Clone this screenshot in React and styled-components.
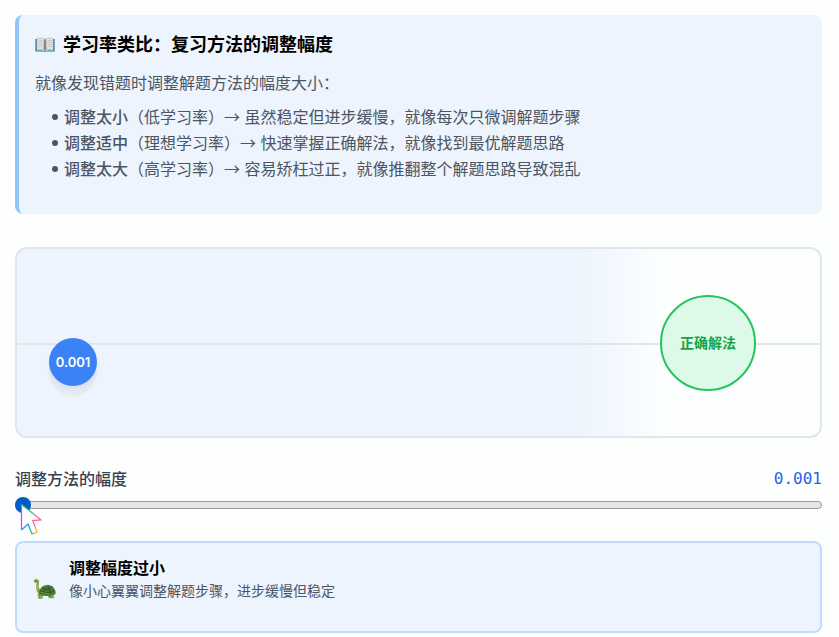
import React, { useState } from "react";
import styled, { createGlobalStyle } from "styled-components";

const GlobalStyle = createGlobalStyle`
  *, *::before, *::after { box-sizing: border-box; }
  body {
    margin: 0;
    background: #fdfffe;
    color: #000;
    font-family: Inter, "Noto Sans CJK SC", sans-serif;
    font-size: 16px;
    line-height: 26px;
  }
`;

const Page = styled.main`
  display: flex;
  flex-direction: column;
  padding: 15px 17px 4px 15px;
`;

const Analogy = styled.section`
  padding: 16px 16px 32px;
  border-left: 4px solid #93c5fd;
  border-radius: 8px;
  background: #edf4fd;
  color: #4b5563;
`;

const AnalogyTitle = styled.h3`
  display: flex;
  align-items: center;
  gap: 8px;
  margin: 0 0 11px;
  color: #000;
  font-size: 18px;
  font-weight: 600;
  line-height: 28px;
`;

const Intro = styled.p`
  margin: 0 0 8px;
`;

const Points = styled.ul`
  margin: 0;
  padding: 0 0 0 17px;
  list-style: none;
`;

const Point = styled.li`
  &::before {
    content: "";
    display: inline-block;
    width: 6px;
    height: 6px;
    margin-right: 6px;
    border-radius: 50%;
    background: #4b5563;
    vertical-align: 3px;
  }
`;

const Strong = styled.strong`
  font-weight: 500;
`;

const Arrow = styled.span`
  font-family: "Noto Sans CJK SC", sans-serif;
  line-height: 1;
`;

const Stage = styled.section`
  position: relative;
  height: 191px;
  margin-top: 33px;
  border: 2px solid #e2e5e9;
  border-radius: 12px;
  background: linear-gradient(90deg, #edf4fd 69%, #f4f9fe 75%, #fdfffe 81%);
`;

const Axis = styled.div`
  position: absolute;
  top: 50%;
  left: 0;
  right: 0;
  height: 2px;
  background: #e2e5e9;
`;

const Ball = styled.div`
  position: absolute;
  top: 89px;
  left: 32px;
  display: grid;
  place-items: center;
  width: 48px;
  height: 48px;
  border-radius: 50%;
  background: #3b82f6;
  box-shadow: 0 4px 4px -1px #d9dfea, 0 10px 2px 0 #e6eaf3;
  color: #fff;
  font-size: 13px;
  font-weight: 600;
`;

const Goal = styled.div`
  position: absolute;
  top: 46px;
  right: 64px;
  display: grid;
  place-items: center;
  width: 96px;
  height: 96px;
  border: 2px solid #22c55e;
  border-radius: 50%;
  background: #dcfae7;
  color: #16a34a;
  font-size: 14px;
  font-weight: 600;
`;

const Control = styled.section`
  display: flex;
  flex-direction: column;
  gap: 6px;
  margin-top: 28px;
`;

const ControlHeader = styled.div`
  display: flex;
  justify-content: space-between;
`;

const Label = styled.label`
  color: #374151;
  font-weight: 500;
`;

const Value = styled.output`
  color: #2563eb;
  font-family: "DejaVu Sans Mono", monospace;
`;

const SliderRow = styled.div`
  position: relative;
  display: flex;
`;

const Slider = styled.input`
  width: 100%;
  height: 14px;
  margin: 0;
  appearance: none;
  background: transparent;

  &::-webkit-slider-runnable-track {
    height: 8px;
    border: 1px solid #999b9d;
    border-radius: 4px;
    background: #e4e5e6;
  }

  &::-webkit-slider-thumb {
    appearance: none;
    width: 16px;
    height: 16px;
    margin-top: -5px;
    margin-left: -1px;
    border: 0;
    border-radius: 50%;
    background: #005cc8;
  }
`;

const Cursor = styled.svg`
  position: absolute;
  top: 5px;
  left: 5px;
  pointer-events: none;
`;

const Feedback = styled.section`
  display: flex;
  align-items: center;
  gap: 12px;
  height: 92px;
  margin-top: 29px;
  padding: 16px;
  border: 2px solid #bfdbfe;
  border-radius: 8px;
  background: #edf4fd;
`;

const FeedbackText = styled.div`
  align-self: flex-start;
  margin-top: -4px;
`;

const FeedbackTitle = styled.h4`
  margin: 0;
  font-size: 16px;
  font-weight: 600;
  line-height: 26px;
`;

const FeedbackDetail = styled.p`
  margin: 0;
  color: #4b5563;
  font-size: 14px;
  line-height: 20px;
`;

const BookIcon = () => (
  <svg width="20" height="20" viewBox="0 0 20 20" aria-hidden="true">
    <path d="M.5 4h19v12.5h-8q-1.5 1-3 0h-8z" fill="#2f80ab" />
    <path d="M.5 4h1v11.5h-1zM18.5 4h1v11.5h-1z" fill="#4f97ba" />
    <path d="M2 3.5q5-1.4 8 .5 3-1.9 8-.5v11.3q-5-.8-8 .8-3-1.6-8-.8z" fill="#e2e2df" stroke="#a9aaa9" strokeWidth=".5" />
    <path d="M10 4q-1.5 1-1.5 3v8l1.5.8 1.5-.8V7q0-2-1.5-3" fill="#a7a8a8" />
    <path d="M10 4.2v11.5" stroke="#55595e" strokeWidth=".8" />
    <path d="M3.5 5.5h4M3.5 7.5h4M3.5 9.5h4M3.5 11.5h4M12.7 5.5h4M12.7 7.5h4M12.7 9.5h4M12.7 11.5h4" stroke="#bcbdbc" strokeWidth=".7" />
    <path d="M2 15.2q5-1 8 .8 3-1.8 8-.8" fill="none" stroke="#f7f7f3" strokeWidth=".6" />
  </svg>
);

const TurtleIcon = () => (
  <svg width="24" height="28" viewBox="0 -4 24 28" aria-hidden="true">
    <path d="M4 18.2 7.8 15l2 1.7-1.2 4.5-3.6.1-.2-1.2 1.5-.8zM14 17l5-.5 1 4.5-4.2.3-.2-1.3z" fill="#75943a" />
    <path d="M7 17.5 9.8 17v4.8H6l.2-1.3 1-.3zM18 17l3.5-1.5 1.8.8-2.5 1.4.5 3.6h-2.8z" fill="#90a846" />
    <path d="M1.1 3.1Q3.3 1.2 5.5 3q.8.8.5 2l-.3 5q.3 2.2 2.8 3l-1 5Q4 16.5 3.3 12.5q-.2-3.5.2-6.7L1.2 5.5Q.4 4.2 1.1 3.1z" fill="#8da544" />
    <path d="M2 3.1q1.7-.8 3 .6M4 7.5q-.4 4 1.2 6.2" fill="none" stroke="#b5bf68" strokeWidth=".7" />
    <path d="M6 16.7q-.6-3 2.3-6.2 3-3.2 7.7-2.6 5.7 1.2 6.6 7.7-2.4 3.5-8.9 3.2-5 .1-7.7-2.1z" fill="#477831" />
    <path d="M7 13.7q6 4.2 15.2 0M10 9.5l1.3 3.2-1.5 5M11.3 12.7l5-1.2 3-2M16.3 11.5l1 4.7M13 8.3l3.3 3.2" fill="none" stroke="#254f2b" strokeWidth=".8" />
    <path d="M10.4 9.7q2.3-1.4 4.5-1M8 14.8q4 2.3 8 2" fill="none" stroke="#79a650" strokeWidth=".8" />
    <path d="M6.3 16.5q6.5 3.2 16.3-.8l-.7 1.6q-7 3.2-14.7.6z" fill="#5b7938" />
    <circle cx="3" cy="3.9" r=".6" fill="#182b20" />
  </svg>
);

const points = [
  ["调整太小", "（低学习率）", "虽然稳定但进步缓慢，就像每次只微调解题步骤"],
  ["调整适中", "（理想学习率）", "快速掌握正确解法，就像找到最优解题思路"],
  ["调整太大", "（高学习率）", "容易矫枉过正，就像推翻整个解题思路导致混乱"],
];

export default function App() {
  const [rate, setRate] = useState(0.001);
  const shown = rate.toFixed(3);

  return (
    <>
      <GlobalStyle />
      <Page>
        <Analogy>
          <AnalogyTitle><BookIcon />学习率类比：复习方法的调整幅度</AnalogyTitle>
          <Intro>就像发现错题时调整解题方法的幅度大小：</Intro>
          <Points>
            {points.map(([name, rateName, detail]) => (
              <Point key={name}>
                <Strong>{name}</Strong>{rateName}<Arrow>→</Arrow> {detail}
              </Point>
            ))}
          </Points>
        </Analogy>
        <Stage>
          <Axis />
          <Goal>正确解法</Goal>
          <Ball>{shown}</Ball>
        </Stage>
        <Control>
          <ControlHeader>
            <Label htmlFor="rate">调整方法的幅度</Label>
            <Value htmlFor="rate">{shown}</Value>
          </ControlHeader>
          <SliderRow>
            <Slider
              id="rate" type="range" min="0.001" max="1" step="0.001"
              value={rate} onChange={(e) => setRate(Number(e.target.value))}
            />
            <Cursor width="22" height="34" viewBox="0 0 22 34" aria-hidden="true">
              <path d="M1.5 1.5V27l6.5-6 4 10 5-2-4.2-11.5L21 17z" fill="#fff" />
              <path d="M1.5 1.5V27" stroke="#bd55ed" strokeWidth="1.3" />
              <path d="M1.5 27 8 21l2 5" fill="none" stroke="#219bf2" strokeWidth="1.3" />
              <path d="m10 26 2 5 2.5-1" fill="none" stroke="#1bc77a" strokeWidth="1.3" />
              <path d="m14.5 30 2.5-1-2-5.5" fill="none" stroke="#ffac2c" strokeWidth="1.3" />
              <path d="m15 23.5-2.2-6L21 17l-8-6.5" fill="none" stroke="#fb63a7" strokeWidth="1.3" />
              <path d="m1.5 1.5 11.5 9" stroke="#20c875" strokeWidth="1.3" />
            </Cursor>
          </SliderRow>
        </Control>
        <Feedback>
          <TurtleIcon />
          <FeedbackText>
            <FeedbackTitle>调整幅度过小</FeedbackTitle>
            <FeedbackDetail>像小心翼翼调整解题步骤，进步缓慢但稳定</FeedbackDetail>
          </FeedbackText>
        </Feedback>
      </Page>
    </>
  );
}
